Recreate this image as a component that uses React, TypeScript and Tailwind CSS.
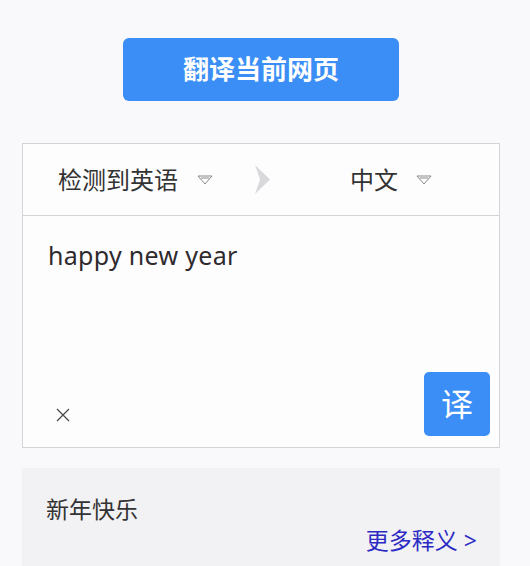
import React from "react";

const Caret = () => (
  <svg width="16" height="10" viewBox="0 0 16 10" className="shrink-0">
    <path d="M1 1 L15 1 L8 9 Z" fill="none" stroke="#8a8a8a" strokeWidth="1" />
    <path d="M4 3 L12 3" stroke="#8a8a8a" strokeWidth="1" />
  </svg>
);

const Chevron = () => (
  <svg width="15" height="29" viewBox="0 0 15 29" className="shrink-0">
    <path d="M0 0 L15 14.5 L0 29 L5 14.5 Z" fill="#d9d9dc" />
  </svg>
);

const App = () => {
  return (
    <div className="h-[566px] overflow-hidden bg-[#f9f9fb] pt-[38px] font-['Noto_Sans','Noto_Sans_CJK_SC',sans-serif]">
      <div className="ml-[22px] w-[478px]">
        <button className="mx-auto flex h-[63px] w-[276px] items-center justify-center rounded-[6px] bg-[#3a8ef6] text-[26px] font-semibold text-white">
          翻译当前网页
        </button>

        <div className="mt-[42px] border border-[#d4d4d8] bg-[#fdfdfe]">
          <div className="flex h-[72px] items-center border-b border-[#d4d4d8] pl-[35px] text-[24px] text-[#333]">
            <span>检测到英语</span>
            <span className="ml-[19px]">
              <Caret />
            </span>
            <span className="ml-[42px]">
              <Chevron />
            </span>
            <span className="ml-[80px]">中文</span>
            <span className="ml-[18px]">
              <Caret />
            </span>
          </div>

          <div className="flex h-[231px] flex-col justify-between">
            <p className="pl-[25px] pt-[21px] text-[25px] leading-[36px] tracking-[0.3px] text-[#2f2a2e]">
              happy new year
            </p>
            <div className="flex items-end justify-between pb-[11px] pl-[33px] pr-[9px]">
              <svg width="14" height="14" viewBox="0 0 14 14" className="mb-[14px]">
                <path d="M1 1 L13 13 M13 1 L1 13" stroke="#4a4a4a" strokeWidth="1.3" />
              </svg>
              <button className="flex h-[64px] w-[66px] items-center justify-center rounded-[5px] bg-[#3a8ef6] text-[32px] text-white">
                译
              </button>
            </div>
          </div>
        </div>

        <div className="mt-[20px] h-[120px] bg-[#f2f1f4] pl-[24px] pr-[23px] pt-[26px]">
          <p className="text-[23px] leading-[30px] text-[#333]">新年快乐</p>
          <div className="mt-[1px] flex justify-end">
            <span className="text-[23px] leading-[30px] text-[#2b2bc4]">更多释义 &gt;</span>
          </div>
        </div>
      </div>
    </div>
  );
};

export default App;
